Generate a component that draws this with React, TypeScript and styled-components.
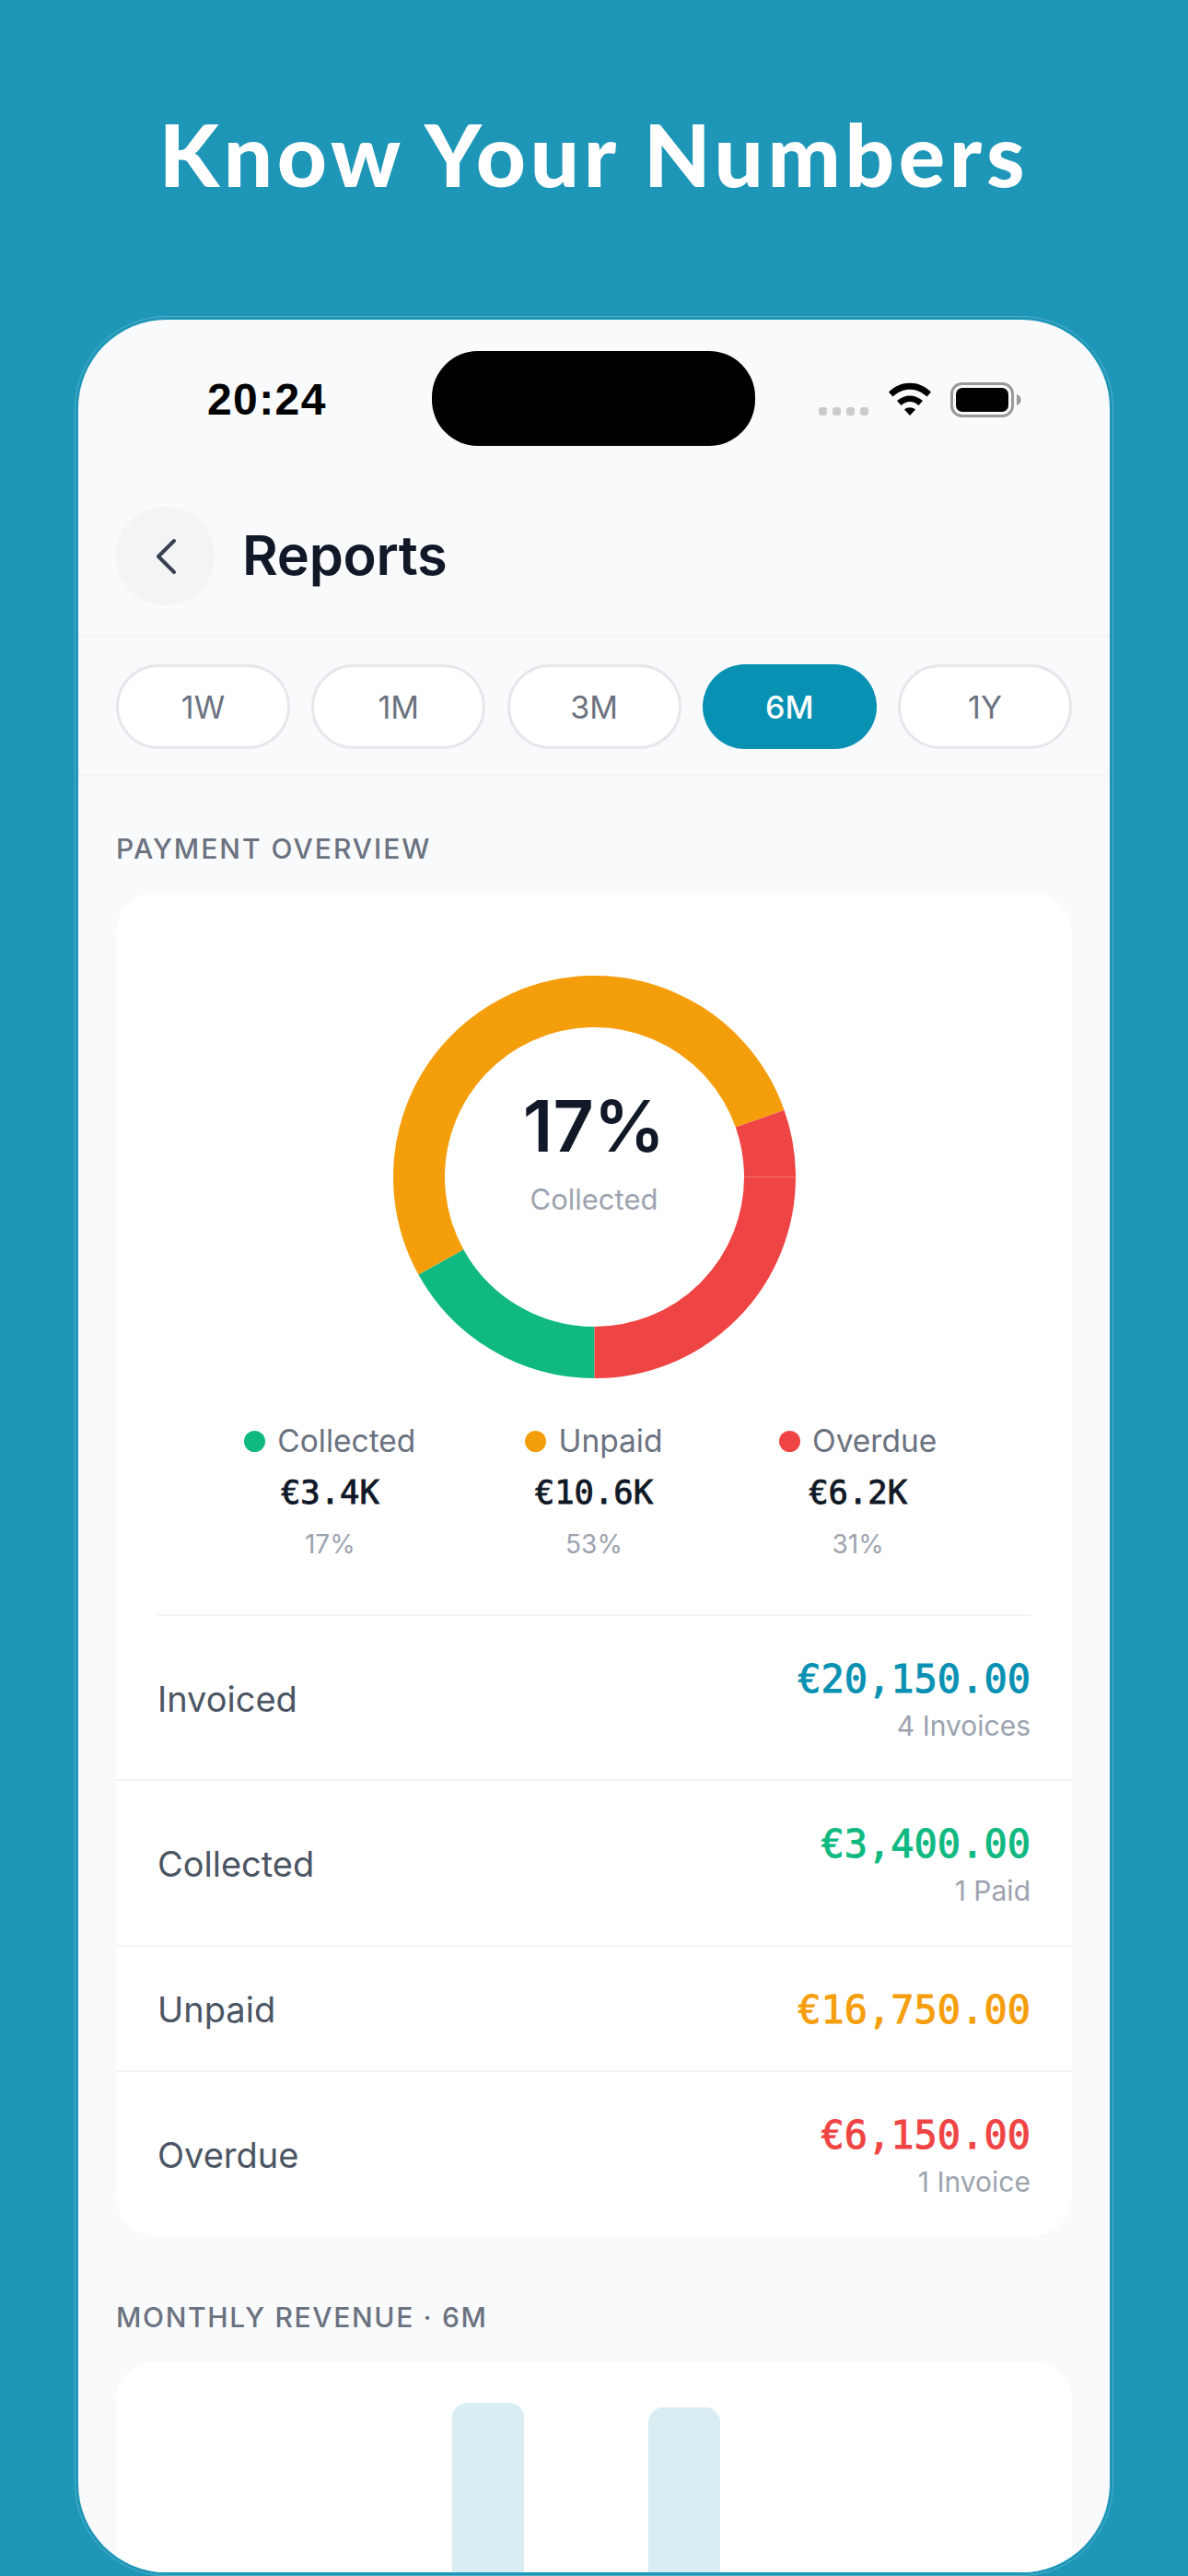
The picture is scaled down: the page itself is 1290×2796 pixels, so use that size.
import React from "react";
import styled, { createGlobalStyle } from "styled-components";

const Global = createGlobalStyle`
  html, body { margin: 0; padding: 0; background: #1e96b7; }
  body { width: 1290px; height: 2796px; overflow: hidden; font-family: "Inter", "Noto Sans", sans-serif; }
  * { box-sizing: border-box; }
`;

const Page = styled.div`
  width: 1290px;
  height: 2796px;
  background: #1e96b7;
  overflow: hidden;
  display: flex;
  flex-direction: column;
  align-items: center;
`;

const Headline = styled.h1`
  margin: 0;
  height: 343px;
  padding-top: 112px;
  font-family: "Lato", sans-serif;
  font-weight: 900;
  font-size: 94px;
  line-height: 110px;
  letter-spacing: 4.7px;
  color: #fff;
`;

const Phone = styled.div`
  width: 1128px;
  height: 2453px;
  flex: none;
  border: 1px solid #4fb0c9;
  border-radius: 100px;
  padding: 3px;
`;

const Screen = styled.div`
  height: 100%;
  border-radius: 96px;
  background: #f9fafb;
  overflow: hidden;
`;

const StatusBar = styled.div`
  height: 198px;
  padding: 34px 95px 0 140px;
  display: flex;
  align-items: flex-start;
`;

const Clock = styled.div`
  width: 244px;
  margin-top: 26px;
  font-family: "Liberation Sans", sans-serif;
  font-weight: 700;
  font-size: 48px;
  line-height: 54px;
  letter-spacing: 1.4px;
  color: #000;
`;

const Island = styled.div`
  width: 352px;
  height: 103px;
  border-radius: 50px;
  background: #000;
`;

const StatusIcons = styled.div`
  margin-left: 69px;
  margin-top: 34px;
  display: flex;
  align-items: flex-start;
`;

const SignalDots = styled.div`
  display: flex;
  gap: 6px;
  margin-top: 27px;
  margin-right: 21px;
`;

const SignalDot = styled.span`
  width: 9px;
  height: 9px;
  border-radius: 3px;
  background: #cbcbcb;
`;

const BatteryIcon = styled.svg`
  margin-left: 20px;
`;

const Header = styled.header`
  height: 147px;
  padding: 5px 41px 0;
  display: flex;
  align-items: flex-start;
  gap: 30px;
  border-bottom: 2px solid #f3f4f6;
`;

const BackButton = styled.button`
  width: 107px;
  height: 107px;
  border: 0;
  border-radius: 50%;
  background: #f3f4f6;
  display: flex;
  align-items: center;
  justify-content: center;
  padding: 0;
`;

const Title = styled.div`
  font-weight: 600;
  font-size: 59.500px;
  line-height: 105px;
  letter-spacing: -0.3px;
  color: #111827;
`;

const Periods = styled.div`
  height: 151px;
  padding: 29px 41px 0;
  display: flex;
  gap: 23.25px;
  border-bottom: 2px solid #f3f4f6;
`;

const Pill = styled.div<{ $active?: boolean }>`
  width: 189px;
  height: 92px;
  border-radius: 46px;
  display: flex;
  align-items: center;
  justify-content: center;
  font-size: 34px;
  font-weight: ${(p) => (p.$active ? 500 : 400)};
  color: ${(p) => (p.$active ? "#fff" : "#6b7280")};
  background: ${(p) => (p.$active ? "#0891b2" : "#fff")};
  border: ${(p) => (p.$active ? "0" : "3px solid #e5e7eb")};
`;

const SectionLabel = styled.div<{ $top: number; $spacing: number }>`
  margin: ${(p) => p.$top}px 41px 0;
  height: 66px;
  font-size: 30px;
  font-weight: 500;
  line-height: 36px;
  letter-spacing: ${(p) => p.$spacing}px;
  color: #6b7280;
`;

const Card = styled.section`
  margin: 0 41px;
  background: #fff;
  border-radius: 43px;
  overflow: hidden;
`;

const DonutBox = styled.div`
  position: relative;
  width: 437px;
  height: 437px;
  margin: 90px auto 0;
`;

const DonutCentre = styled.div`
  position: absolute;
  inset: 0;
  display: flex;
  flex-direction: column;
  align-items: center;
  justify-content: center;
`;

const Percent = styled.div`
  font-size: 77px;
  font-weight: 600;
  line-height: 96px;
  color: #111827;
  margin-top: -59px;
`;

const PercentLabel = styled.div`
  font-size: 31px;
  line-height: 40px;
  color: #9ca3af;
  margin-top: 12px;
`;

const Legend = styled.div`
  display: grid;
  grid-template-columns: repeat(3, 1fr);
  padding: 46px 89px 0;
`;

const LegendItem = styled.div`
  display: flex;
  flex-direction: column;
  align-items: center;
`;

const LegendName = styled.div`
  display: flex;
  align-items: center;
  gap: 13px;
  font-size: 33.500px;
  line-height: 44px;
  white-space: nowrap;
  color: #6b7280;
`;

const Dot = styled.span<{ $color: string }>`
  width: 23px;
  height: 23px;
  border-radius: 50%;
  background: ${(p) => p.$color};
`;

const LegendValue = styled.div`
  margin-top: 12px;
  font-family: "DejaVu Sans Mono", monospace;
  font-weight: 400;
  font-size: 35.500px;
  line-height: 44px;
  -webkit-text-stroke: 0.9px #111827;
  color: #111827;
`;

const LegendPct = styled.div`
  margin-top: 16px;
  font-size: 28px;
  line-height: 36px;
  color: #9ca3af;
`;

const Rule = styled.div`
  height: 2px;
  margin: 58px 45px 0;
  background: #f3f4f6;
`;

const Row = styled.div<{ $height: number; $last?: boolean }>`
  height: ${(p) => p.$height}px;
  padding: 0 45px;
  display: flex;
  align-items: center;
  justify-content: space-between;
  border-bottom: ${(p) => (p.$last ? "0" : "2px solid #f3f4f6")};
`;

const RowLabel = styled.div`
  font-size: 38px;
  padding-top: 2px;
  color: #4b5563;
`;

const RowRight = styled.div`
  display: flex;
  flex-direction: column;
  align-items: flex-end;
  padding-top: 4px;
`;

const Amount = styled.div<{ $color: string }>`
  font-family: "DejaVu Sans Mono", monospace;
  font-weight: 400;
  font-size: 42px;
  line-height: 50px;
  -webkit-text-stroke: 1px ${(p) => p.$color};
  color: ${(p) => p.$color};
`;

const RowSub = styled.div`
  margin-top: 6px;
  font-size: 30px;
  line-height: 38px;
  color: #9ca3af;
`;

const ChartCard = styled(Card)`
  height: 300px;
  padding: 45px 0 0 365px;
  display: flex;
  align-items: flex-start;
  gap: 135px;
`;

const Bar = styled.div<{ $top: number }>`
  width: 78px;
  height: 300px;
  margin-top: ${(p) => p.$top}px;
  border-radius: 16px 16px 0 0;
  background: #d9eef3;
`;

const arc = (from: number, to: number) => {
  const r = 190.5;
  const c = 218.5;
  const pt = (a: number) => {
    const rad = (a * Math.PI) / 180;
    return `${c + r * Math.cos(rad)} ${c + r * Math.sin(rad)}`;
  };
  return `M ${pt(from)} A ${r} ${r} 0 ${to - from > 180 ? 1 : 0} 1 ${pt(to)}`;
};

const segments = [
  { from: 90, to: 151, color: "#10b981" },
  { from: 151, to: 340.6, color: "#f59e0b" },
  { from: 340.6, to: 360, color: "#ef4444" },
  { from: 0, to: 90, color: "#ef4444" },
];

const legend = [
  { name: "Collected", color: "#10b981", value: "€3.4K", pct: "17%" },
  { name: "Unpaid", color: "#f59e0b", value: "€10.6K", pct: "53%" },
  { name: "Overdue", color: "#ef4444", value: "€6.2K", pct: "31%" },
];

const rows = [
  { label: "Invoiced", amount: "€20,150.00", color: "#0891b2", sub: "4 Invoices", height: 179 },
  { label: "Collected", amount: "€3,400.00", color: "#10b981", sub: "1 Paid", height: 180 },
  { label: "Unpaid", amount: "€16,750.00", color: "#f59e0b", height: 136 },
  { label: "Overdue", amount: "€6,150.00", color: "#ef4444", sub: "1 Invoice", height: 178, last: true },
];

export default function App() {
  return (
    <Page>
      <Global />
      <Headline>Know Your Numbers</Headline>
      <Phone>
        <Screen>
          <StatusBar>
            <Clock>20:24</Clock>
            <Island />
            <StatusIcons>
              <SignalDots>
                <SignalDot />
                <SignalDot />
                <SignalDot />
                <SignalDot />
              </SignalDots>
              <svg width="48" height="36" viewBox="0 0 48 36">
                <path d="M1 10.5C14 -2.5 34 -2.5 47 10.5L42.5 15.5C31.5 5 16.5 5 5.5 15.5Z" fill="#000" />
                <path d="M10 20C18 12.5 30 12.5 38 20L33.5 25C27.5 19.5 20.5 19.5 14.5 25Z" fill="#000" />
                <path d="M18 29.5C21.5 26.5 26.5 26.5 30 29.5L24 36Z" fill="#000" />
              </svg>
              <BatteryIcon width="78" height="38" viewBox="0 0 78 38">
                <rect x="1.5" y="1.5" width="66" height="35" rx="11" fill="none" stroke="#999" strokeWidth="3" />
                <rect x="6" y="6" width="57" height="26" rx="7" fill="#000" />
                <path d="M72 13C75 14 76.500 16 76.500 19C76.500 22 75 24 72 25Z" fill="#999" />
              </BatteryIcon>
            </StatusIcons>
          </StatusBar>

          <Header>
            <BackButton>
              <svg width="24" height="40" viewBox="0 0 24 40" fill="none">
                <path d="M21 3L4 20L21 37" stroke="#374151" strokeWidth="4" strokeLinecap="round" strokeLinejoin="round" />
              </svg>
            </BackButton>
            <Title>Reports</Title>
          </Header>

          <Periods>
            <Pill>1W</Pill>
            <Pill>1M</Pill>
            <Pill>3M</Pill>
            <Pill $active>6M</Pill>
            <Pill>1Y</Pill>
          </Periods>

          <SectionLabel $top={60} $spacing={2}>PAYMENT OVERVIEW</SectionLabel>
          <Card>
            <DonutBox>
              <svg width="437" height="437" viewBox="0 0 437 437">
                {segments.map((s) => (
                  <path key={s.from} d={arc(s.from, s.to)} fill="none" stroke={s.color} strokeWidth="56" />
                ))}
              </svg>
              <DonutCentre>
                <Percent>17%</Percent>
                <PercentLabel>Collected</PercentLabel>
              </DonutCentre>
            </DonutBox>

            <Legend>
              {legend.map((l) => (
                <LegendItem key={l.name}>
                  <LegendName>
                    <Dot $color={l.color} />
                    {l.name}
                  </LegendName>
                  <LegendValue>{l.value}</LegendValue>
                  <LegendPct>{l.pct}</LegendPct>
                </LegendItem>
              ))}
            </Legend>

            <Rule />

            {rows.map((r) => (
              <Row key={r.label} $height={r.height} $last={r.last}>
                <RowLabel>{r.label}</RowLabel>
                <RowRight>
                  <Amount $color={r.color}>{r.amount}</Amount>
                  {r.sub && <RowSub>{r.sub}</RowSub>}
                </RowRight>
              </Row>
            ))}
          </Card>

          <SectionLabel $top={70} $spacing={1.65}>MONTHLY REVENUE · 6M</SectionLabel>
          <ChartCard>
            <Bar $top={0} />
            <Bar $top={5} />
          </ChartCard>
        </Screen>
      </Phone>
    </Page>
  );
}
